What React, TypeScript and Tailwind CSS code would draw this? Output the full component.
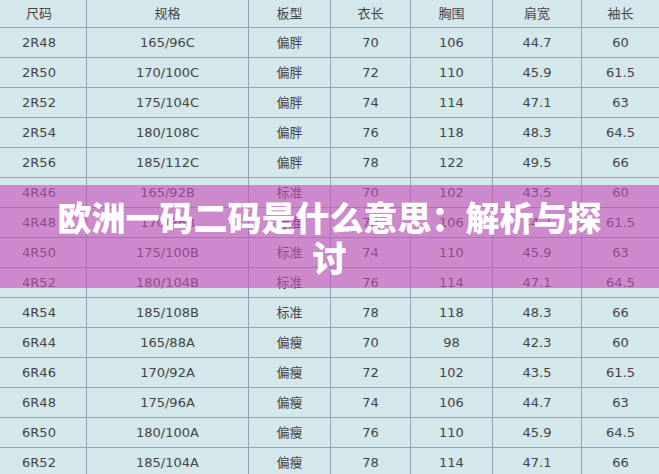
const headers = ["尺码", "规格", "板型", "衣长", "胸围", "肩宽", "袖长"];

const rows: string[][] = [
  ["2R48", "165/96C", "偏胖", "70", "106", "44.7", "60"],
  ["2R50", "170/100C", "偏胖", "72", "110", "45.9", "61.5"],
  ["2R52", "175/104C", "偏胖", "74", "114", "47.1", "63"],
  ["2R54", "180/108C", "偏胖", "76", "118", "48.3", "64.5"],
  ["2R56", "185/112C", "偏胖", "78", "122", "49.5", "66"],
  ["4R46", "165/92B", "标准", "70", "102", "43.5", "60"],
  ["4R48", "170/96B", "标准", "72", "106", "44.7", "61.5"],
  ["4R50", "175/100B", "标准", "74", "110", "45.9", "63"],
  ["4R52", "180/104B", "标准", "76", "114", "47.1", "64.5"],
  ["4R54", "185/108B", "标准", "78", "118", "48.3", "66"],
  ["6R44", "165/88A", "偏瘦", "70", "98", "42.3", "60"],
  ["6R46", "170/92A", "偏瘦", "72", "102", "43.5", "61.5"],
  ["6R48", "175/96A", "偏瘦", "74", "106", "44.7", "63"],
  ["6R50", "180/100A", "偏瘦", "76", "110", "45.9", "64.5"],
  ["6R52", "185/104A", "偏瘦", "78", "114", "47.1", "66"],
];

const gridCols = "grid grid-cols-[87px_162px_82px_80px_82px_89px_77px]";

function Row({ cells, header }: { cells: string[]; header?: boolean }) {
  return (
    <div className={`${gridCols} border-b border-[#94a6ab] ${header ? "h-[28px]" : "h-[30px]"}`}>
      {cells.map((c, i) => (
        <div
          key={i}
          className={`flex items-center justify-center ${i === 0 ? "pr-[8px]" : ""} ${
            i < cells.length - 1 ? "border-r border-[#94a6ab]" : ""
          }`}
        >
          {c}
        </div>
      ))}
    </div>
  );
}

export default function App() {
  return (
    <div className="relative h-[474px] w-[659px] overflow-hidden bg-[#d4e7eb]">
      <div
        className="text-[13px] text-[#444]"
        style={{ fontFamily: '"DejaVu Sans", "Noto Sans CJK SC", sans-serif' }}
      >
        <Row cells={headers} header />
        {rows.map((r) => (
          <Row key={r[0]} cells={r} />
        ))}
      </div>

      <div className="absolute left-0 right-0 top-[185px] flex h-[103px] items-center justify-center bg-[rgba(199,77,184,0.6)] px-[50px]">
        <h1
          className="text-center text-[34px] font-black leading-[40px] text-white"
          style={{ fontFamily: '"Noto Sans CJK SC", sans-serif' }}
        >
          欧洲一码二码是什么意思：解析与探讨
        </h1>
      </div>
    </div>
  );
}
